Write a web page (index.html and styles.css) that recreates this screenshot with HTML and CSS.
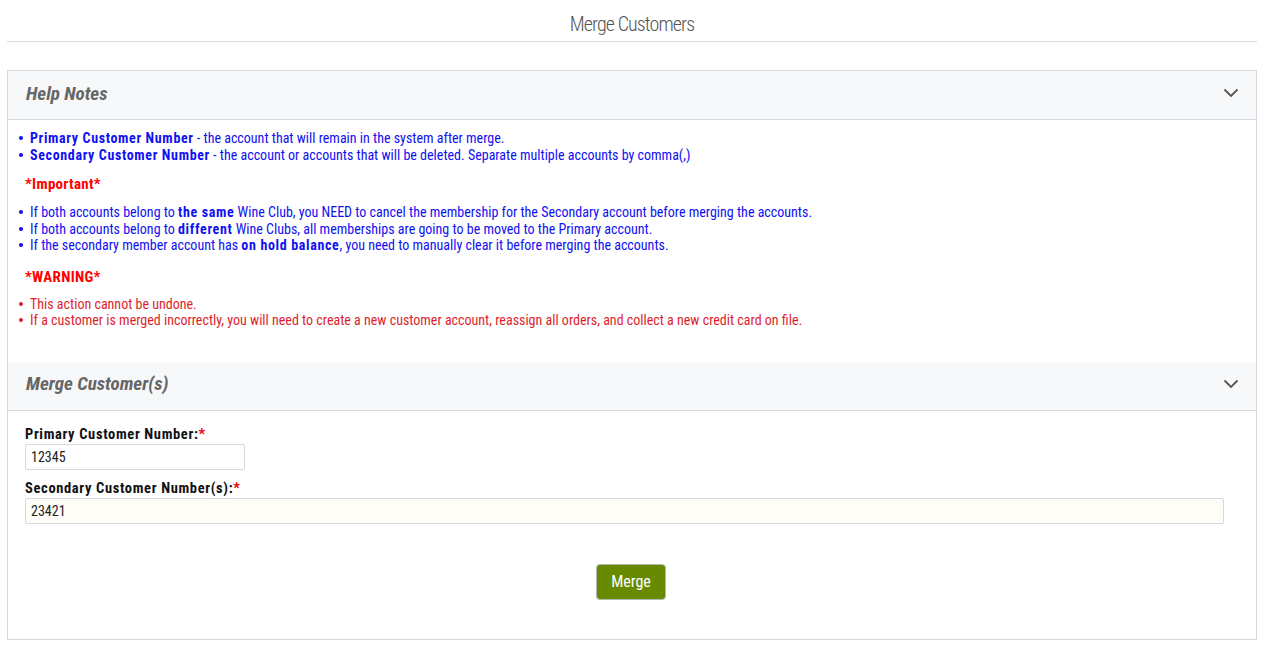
FILE: index.html
```html
<!DOCTYPE html>
<html>
<head>
<meta charset="utf-8">
<link rel="stylesheet" href="styles.css">
</head>
<body>
<div class="page">
  <h1 class="page-title">Merge Customers</h1>
  <div class="panel">
    <div class="panel-head">
      <span class="panel-title">Help Notes</span>
      <svg class="chev" width="16" height="10" viewBox="0 0 16 10"><path d="M1.5 1.5 L8 8 L14.5 1.5" fill="none" stroke="#555" stroke-width="1.8"/></svg>
    </div>
    <div class="notes">
      <ul class="list blue">
        <li><b>Primary Customer Number</b> - the account that will remain in the system after merge.</li>
        <li><b>Secondary Customer Number</b> - the account or accounts that will be deleted. Separate multiple accounts by comma(,)</li>
      </ul>
      <div class="note-head">*Important*</div>
      <ul class="list blue">
        <li>If both accounts belong to <b>the same</b> Wine Club, you NEED to cancel the membership for the Secondary account before merging the accounts.</li>
        <li>If both accounts belong to <b>different</b> Wine Clubs, all memberships are going to be moved to the Primary account.</li>
        <li>If the secondary member account has <b>on hold balance</b>, you need to manually clear it before merging the accounts.</li>
      </ul>
      <div class="note-head warn">*WARNING*</div>
      <ul class="list red">
        <li>This action cannot be undone.</li>
        <li>If a customer is merged incorrectly, you will need to create a new customer account, reassign all orders, and collect a new credit card on file.</li>
      </ul>
    </div>
    <div class="panel-head no-top">
      <span class="panel-title">Merge Customer(s)</span>
      <svg class="chev" width="16" height="10" viewBox="0 0 16 10"><path d="M1.5 1.5 L8 8 L14.5 1.5" fill="none" stroke="#555" stroke-width="1.8"/></svg>
    </div>
    <form class="form">
      <label class="lbl">Primary Customer Number:<span class="req">*</span></label>
      <input class="inp short" type="text" value="12345">
      <label class="lbl">Secondary Customer Number(s):<span class="req">*</span></label>
      <input class="inp wide" type="text" value="23421">
      <div class="actions"><button type="button" class="btn">Merge</button></div>
    </form>
  </div>
</div>
</body>
</html>
```
FILE: styles.css
```css
* { box-sizing: border-box; }
body {
  margin: 0;
  background: #fff;
  font-family: "Roboto Condensed", Roboto, "Liberation Sans", sans-serif;
  font-stretch: 75%;
}
.page { padding: 0 8px 0 7px; }
.page-title {
  margin: 0;
  height: 42px;
  padding-top: 11px;
  text-align: center;
  font-size: 20px;
  font-weight: 300;
  letter-spacing: -0.9px;
  color: #555;
  border-bottom: 1px solid #dcdcdc;
  line-height: 26px;
}
.panel {
  margin-top: 28px;
  border: 1px solid #d5d8dc;
  height: 570px;
}
.panel-head {
  height: 49px;
  background: #f7f8fa;
  border-bottom: 1px solid #d5d8dc;
  display: flex;
  align-items: center;
  justify-content: space-between;
  padding: 0 18px 4px 18px;
}
.panel-title {
  font-size: 19px;
  font-weight: 700;
  font-style: italic;
  color: #666;
}
.chev { margin-right: -1px; }
.notes { padding: 10px 0 33px 0; }
.list {
  margin: 0;
  padding-left: 11px;
  list-style: none;
  font-size: 14px;
  line-height: 16.5px;
}
.list li::before {
  content: "";
  display: inline-block;
  width: 4px;
  height: 4px;
  border-radius: 50%;
  background: currentColor;
  margin: 0 7px 0 0;
  vertical-align: 3px;
}
.list b { letter-spacing: 0.65px; }
.blue { color: #1010f2; }
.red { color: #dc1f2e; }
.note-head {
  color: #f00;
  font-weight: 700;
  letter-spacing: 0.3px;
  font-size: 15px;
  margin: 12px 0 11px 17px;
}
.note-head.warn { margin: 14px 0 10px 17px; }
.form { padding: 15px 17px 0 17px; }
.lbl {
  display: block;
  font-size: 14.5px;
  font-weight: 700;
  letter-spacing: 0.65px;
  color: #111;
  line-height: 17px;
}
.req { color: #e00; }
.inp {
  display: block;
  height: 26px;
  border: 1px solid #d5d8dc;
  border-radius: 2px;
  font-family: inherit;
  font-stretch: 75%;
  font-size: 14px;
  color: #222;
  padding: 0 5px;
  margin: 1px 0 10px 0;
}
.short { width: 220px; }
.wide { width: 1199px; background: #fffdf7; }
.actions { display: flex; justify-content: center; padding-top: 30px; }
.btn {
  background: #688a00;
  color: #fff;
  border: 1px solid #b5b8b0;
  border-radius: 4px;
  width: 70px;
  height: 36px;
  margin-left: -2px;
  font-family: inherit;
  font-stretch: 75%;
  font-size: 16px;
}
```
